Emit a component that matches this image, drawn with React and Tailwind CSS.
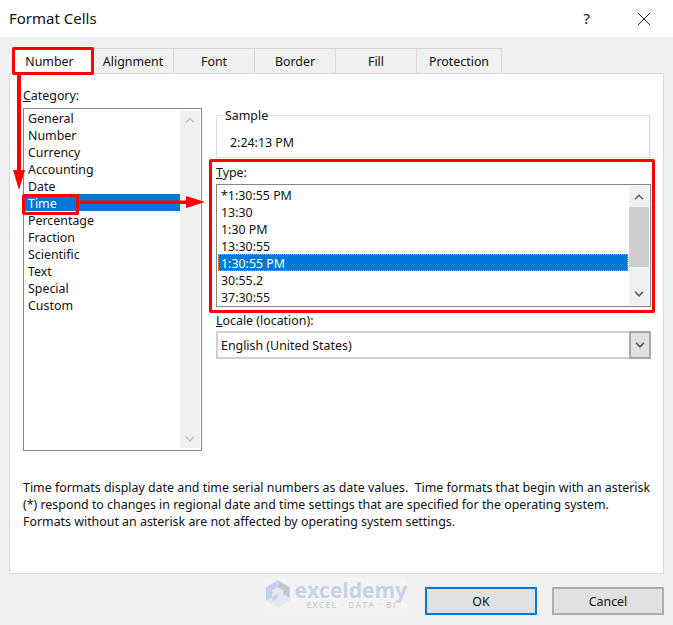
import React from "react";

const categories = ["General", "Number", "Currency", "Accounting", "Date", "Time", "Percentage", "Fraction", "Scientific", "Text", "Special", "Custom"];
const types = ["*1:30:55 PM", "13:30", "1:30 PM", "13:30:55", "1:30:55 PM", "30:55.2", "37:30:55"];
const tabs = ["Alignment", "Font", "Border", "Fill", "Protection"];

const Chevron = ({ up, color = "#606060" }) => (
    <svg width="10" height="6" viewBox="0 0 10 6" fill="none" stroke={color} strokeWidth="1.6">
        <path d={up ? "M1 5.3 L5 1.3 L9 5.3" : "M1 0.8 L5 4.8 L9 0.8"} />
    </svg>
);

const App = () => {
    return (
        <div className="relative w-[673px] h-[625px] overflow-hidden bg-[#f0f0f0] text-[12.4px] leading-[17px] text-[#111] font-['Noto_Sans','Open_Sans',sans-serif] flex flex-col">
            {/* title bar */}
            <div className="h-[37px] bg-white flex items-center pl-[9px] pr-[22px] shrink-0">
                <span className="text-[15px]">Format Cells</span>
                <span className="ml-auto text-[15px] mr-[47px]">?</span>
                <svg width="14" height="14" viewBox="0 0 14 14" stroke="#222" strokeWidth="1" fill="none">
                    <path d="M1 1 L13 13 M13 1 L1 13" />
                </svg>
            </div>

            {/* tabs */}
            <div className="flex mt-[11px] ml-[13px] h-[25px] shrink-0 relative z-10">
                <div className="w-[80px] h-[26px] bg-white flex items-center justify-center pr-[7px]">Number</div>
                {tabs.map((t, i) => (
                    <div
                        key={t}
                        className={`${i === 4 ? "w-[85px]" : "w-[81px]"} border-t border-r border-[#d9d9d9] flex items-center justify-center`}
                    >
                        {t}
                    </div>
                ))}
            </div>

            {/* panel */}
            <div className="ml-[9px] w-[655px] h-[501px] bg-white border border-[#d9d9d9] shrink-0 flex flex-col pl-[13px]">
                <div className="flex">
                    <div className="w-[193px] shrink-0 pt-[13px]">
                        <div className="h-[21px]"><u>C</u>ategory:</div>
                        <div className="w-[179px] h-[343px] border border-[#82878c] flex">
                            <div className="w-[156px]">
                                {categories.map((c) => (
                                    <div key={c} className={`h-[17px] leading-[19px] pl-[4px] ${c === "Time" ? "bg-[#0078d7] text-white" : ""}`}>{c}</div>
                                ))}
                            </div>
                            <div className="w-[20px] my-[2px] bg-[#f0f0f0] flex flex-col items-center justify-between py-[6px]">
                                <Chevron up color="#c4c4c4" />
                                <Chevron color="#c4c4c4" />
                            </div>
                        </div>
                    </div>

                    <div className="w-[435px] shrink-0 pt-[41px]">
                        <fieldset className="h-[50px] w-[434px] border border-[#dcdcdc] pl-[8px] -mt-[7px]">
                            <legend className="px-0 leading-[14px] relative top-[1px]">Sample</legend>
                            <div className="pl-[5px] pt-[12px]">2:24:13 PM</div>
                        </fieldset>

                        <div className="mt-[6px] h-[20px]"><u>T</u>ype:</div>
                        <div className="h-[123px] border border-[#82878c] flex pl-[1px]">
                            <div className="w-[410px] pt-[1px]">
                                {types.map((t) => (
                                    <div key={t} className={`h-[17px] leading-[19px] pl-[3px] ${t === "1:30:55 PM" ? "bg-[#0078d7] text-white outline-1 -outline-offset-1 outline-dotted outline-[#f39a2b]" : ""}`}>{t}</div>
                                ))}
                            </div>
                            <div className="relative w-[20px] ml-[1px] my-[1px] bg-[#f0f0f0] flex flex-col items-center justify-between py-[8px]">
                                <Chevron up />
                                <div className="absolute left-0 right-0 top-[21px] h-[60px] bg-[#cdcdcd]" />
                                <Chevron />
                            </div>
                        </div>

                        <div className="mt-[5px] h-[20px]"><u>L</u>ocale (location):</div>
                        <div className="h-[28px] -mt-[1px] border-2 border-[#d0d0d0] border-r-0 flex items-center pl-[3px] justify-between">
                            <span className="pt-[1px]">English (United States)</span>
                            <div className="w-[22px] h-[28px] border-2 border-[#a8a8a8] bg-[#e1e1e1] flex items-center justify-center shrink-0">
                                <Chevron color="#555" />
                            </div>
                        </div>
                    </div>
                </div>

                <p className="mt-[28px] w-[640px] whitespace-pre">
                    {"Time formats display date and time serial numbers as date values.  Time formats that begin with an asterisk\n(*) respond to changes in regional date and time settings that are specified for the operating system.\nFormats without an asterisk are not affected by operating system settings."}
                </p>
            </div>

            {/* footer */}
            <div className="flex-1 flex items-start pt-[13px] pl-[265px]">
                <div className="w-[142px] h-[32px] -mt-[9px] mr-[18px] bg-[#f3f3f3] flex items-center shrink-0">
                    <svg width="28" height="32" viewBox="0 0 28 32">
                        <path d="M14 1 L27 8.5 L27 23.5 L14 31 L1 23.5 L1 8.5 Z" fill="#e3e9ee" />
                        <path d="M14 1 L1 8.5 L1 23.5 L8 19.5 L8 12 L14 8.5 Z" fill="#c2d0ec" />
                        <path d="M14 1 L27 8.5 L27 20 L20 16 L20 12 L14 8.5 Z" fill="#c4c9cf" />
                        <path d="M8 19.5 L14 16 L14 21 L8 24 Z" fill="#c2d0ec" />
                    </svg>
                    <div className="ml-[4px] flex flex-col font-['Open_Sans',sans-serif]">
                        <span className="text-[21px] leading-[20px] font-bold text-[#c5d2ec]">exceldemy</span>
                        <span className="text-[8px] leading-[9px] font-semibold tracking-[1.5px] text-[#c9ced3] pl-[12px]">EXCEL · DATA · BI</span>
                    </div>
                </div>
                <button className="w-[112px] h-[28px] bg-[#e1e1e1] border-2 border-[#0078d7]">OK</button>
                <button className="w-[112px] h-[28px] ml-[15px] bg-[#e1e1e1] border-2 border-[#adadad]">Cancel</button>
            </div>

            {/* red annotations */}
            <div className="absolute left-[12px] top-[47px] w-[82px] h-[28px] border-[3px] border-[#ff0000] rounded-[2px] z-20" />
            <div className="absolute left-[22px] top-[194px] w-[57px] h-[21px] border-[3px] border-[#ff0000] rounded-[2px] z-20" />
            <div className="absolute left-[209px] top-[159px] w-[446px] h-[154px] border-[3px] border-[#ff0000] rounded-[2px] z-20" />
            <svg className="absolute left-0 top-0 z-20 pointer-events-none" width="673" height="625">
                <path d="M17 75 H21 V170 H25 L19 190 L13 170 H17 Z" fill="#ff0000" />
                <path d="M80 200.5 H186 V196 L205 202 L186 208 V204 H80 Z" fill="#ff0000" />
            </svg>
        </div>
    );
};

export default App;
